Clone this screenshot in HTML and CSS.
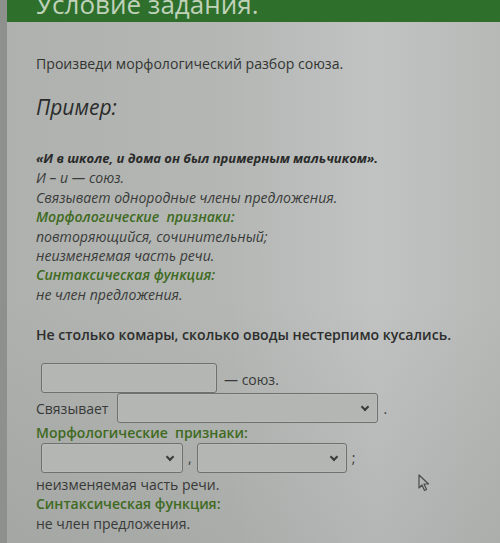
FILE: index.html
```html
<!DOCTYPE html>
<html lang="ru">
<head>
<meta charset="utf-8">
<title>Условие задания</title>
<link rel="stylesheet" href="styles.css">
</head>
<body>
<div class="frame">
  <div class="panel">
    <header class="bar">
      <h1 class="bar-title">Условие задания.</h1>
    </header>
    <main class="content">
      <p class="task">Произведи морфологический разбор союза.</p>
      <h2 class="example-title">Пример:</h2>
      <div class="example">
        <p class="ex-quote">«И в школе, и дома он был примерным мальчиком».</p>
        <p>И – и — союз.</p>
        <p>Связывает однородные члены предложения.</p>
        <p class="label">Морфологические&nbsp; признаки:</p>
        <p>повторяющийся, сочинительный;</p>
        <p>неизменяемая часть речи.</p>
        <p class="label">Синтаксическая функция:</p>
        <p>не член предложения.</p>
      </div>
      <p class="sentence">Не столько комары, сколько оводы нестерпимо кусались.</p>
      <div class="answer">
        <div class="row row-first">
          <span class="field field-text"></span>
          <span class="after">— союз.</span>
        </div>
        <div class="row">
          <span class="before">Связывает</span>
          <span class="field field-select wide"><i class="chev"></i></span>
          <span class="punct">.</span>
        </div>
        <p class="label plain">Морфологические&nbsp; признаки:</p>
        <div class="row">
          <span class="field field-select small"><i class="chev"></i></span>
          <span class="punct">,</span>
          <span class="field field-select small2"><i class="chev"></i></span>
          <span class="punct">;</span>
        </div>
        <p class="line first-line">неизменяемая часть речи.</p>
        <p class="label plain">Синтаксическая функция:</p>
        <p class="line">не член предложения.</p>
      </div>
      <svg class="cursor" width="12" height="18" viewBox="0 0 12 18">
        <path d="M1 1 L1 14 L4 11 L6.5 16.5 L8.5 15.5 L6 10 L10.5 10 Z" fill="none" stroke="#4a4c4a" stroke-width="1.2" stroke-linejoin="round"/>
      </svg>
    </main>
  </div>
</div>
</body>
</html>
```

FILE: styles.css
```css
html, body {
  margin: 0;
  padding: 0;
  height: 100%;
}

body {
  background: #8d908c;
  font-family: "Open Sans", "Noto Sans", sans-serif;
  color: #2f302f;
  overflow: hidden;
}

.frame {
  height: 100%;
  padding-left: 7px;
}

.panel {
  height: 100%;
  background:
    linear-gradient(180deg, rgba(255, 255, 255, 0) 55%, rgba(90, 92, 90, 0.12) 100%),
    linear-gradient(90deg, #aeb1ae 0%, #b4b7b4 45%, #c0c3c2 75%, #b6b9b6 100%);
}

.bar {
  height: 22px;
  background: #2f6f2c;
  overflow: hidden;
  padding-left: 29px;
}

.bar-title {
  margin: -14px 0 0;
  font-size: 26px;
  font-weight: 400;
  line-height: 36px;
  color: #bfd2b9;
  white-space: nowrap;
}

.content {
  position: relative;
  padding: 0 0 0 29px;
}

.task {
  margin: 0;
  padding-top: 32px;
  font-size: 14.1px;
  line-height: 20px;
  color: #333533;
}

.example-title {
  margin: 20px 0 0;
  font-size: 21px;
  font-style: italic;
  font-weight: 400;
  line-height: 26px;
  color: #2a2b2a;
}

.example {
  margin-top: 29px;
  font-style: italic;
  font-size: 14.1px;
  line-height: 19.4px;
  color: #3a3b3a;
}

.example p {
  margin: 0;
}

.example .ex-quote {
  font-size: 13px;
  font-weight: 700;
  color: #2a2b2a;
}

.label {
  color: #3f6a22;
  font-weight: 600;
}

.sentence {
  margin: 21px 0 0;
  font-size: 14.1px;
  font-weight: 600;
  line-height: 20px;
  color: #2d2e2d;
}

.answer {
  margin-top: 18px;
  font-size: 14px;
  line-height: 19.5px;
  color: #383938;
}

.answer p {
  margin: 0;
}

.row {
  display: flex;
  align-items: center;
  gap: 6px;
}

.row-first {
  padding-left: 5px;
  gap: 7px;
}

.row-first .after {
  padding-top: 3px;
}

.field {
  position: relative;
  display: block;
  height: 30px;
  box-sizing: border-box;
  border: 1px solid #6e716e;
  border-radius: 3px;
  background: #b3b6b3;
  box-shadow: inset 0 0 0 1px rgba(255, 255, 255, 0.08);
}

.field-text {
  width: 176px;
}

.wide {
  width: 261px;
  margin-left: 3px;
}

.row .small {
  width: 142px;
  margin-left: 5px;
}

.small2 {
  width: 150px;
}

.row .punct {
  margin-left: -1px;
  margin-right: -1px;
}

.chev {
  position: absolute;
  right: 9px;
  top: 10px;
  width: 4px;
  height: 4px;
  border-right: 2px solid #3a3b3a;
  border-bottom: 2px solid #3a3b3a;
  transform: rotate(45deg);
}

.first-line {
  padding-top: 2px;
}

.cursor {
  position: absolute;
  left: 411px;
  top: 452px;
}
```
